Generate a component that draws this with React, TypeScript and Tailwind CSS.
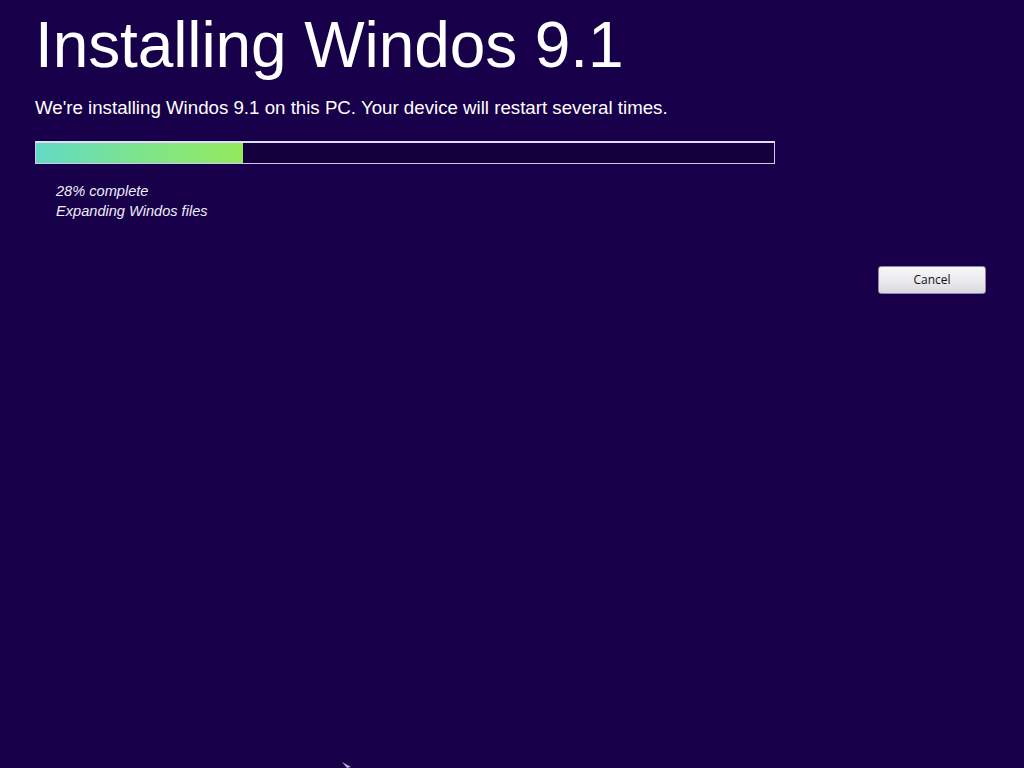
export default function App() {
  const progress = 28;

  return (
    <div
      className="relative h-[768px] w-[1024px] overflow-hidden bg-[#170049] text-white"
      style={{ fontFamily: '"Liberation Sans", Arial, sans-serif' }}
    >
      <div className="pl-[35px] pt-[8px]">
        <h1 className="text-[64px] leading-[74px] tracking-[-0.1px]">Installing Windos 9.1</h1>
        <p className="mt-[14px] text-[18.7px] leading-[24px]">
          We're installing Windos 9.1 on this PC. Your device will restart several times.
        </p>

        {/* progress bar */}
        <div className="mt-[21px] h-[23px] w-[740px] border border-[#cfc8ea] border-t-2 border-t-[#e2dcf5] bg-[#13003d]">
          <div
            className="h-full bg-gradient-to-r from-[#62d9c4] via-[#7de48c] to-[#93ea5c]"
            style={{ width: `${progress}%` }}
          />
        </div>

        <div className="mt-[17px] pl-[21px] text-[14.6px] italic leading-[20px] text-[#f0eefa]">
          <p>{progress}% complete</p>
          <p>Expanding Windos files</p>
        </div>
      </div>

      <div className="mt-[45px] flex justify-end pr-[38px]">
        <button
          className="h-[28px] w-[108px] rounded-[3px] border border-[#8c87a6] bg-gradient-to-b from-[#f7f7f9] via-[#ebebef] to-[#d8d8de] text-[12px] text-[#111]"
          style={{ fontFamily: '"Open Sans", "Noto Sans", sans-serif' }}
        >
          Cancel
        </button>
      </div>

      {/* mouse cursor peeking in at the bottom */}
      <svg className="absolute left-[341px] top-[761px]" width="12" height="8" viewBox="0 0 12 8">
        <path d="M1 1 L10 6 L6 7 Z" fill="#b9b2dc" />
      </svg>
    </div>
  );
}
